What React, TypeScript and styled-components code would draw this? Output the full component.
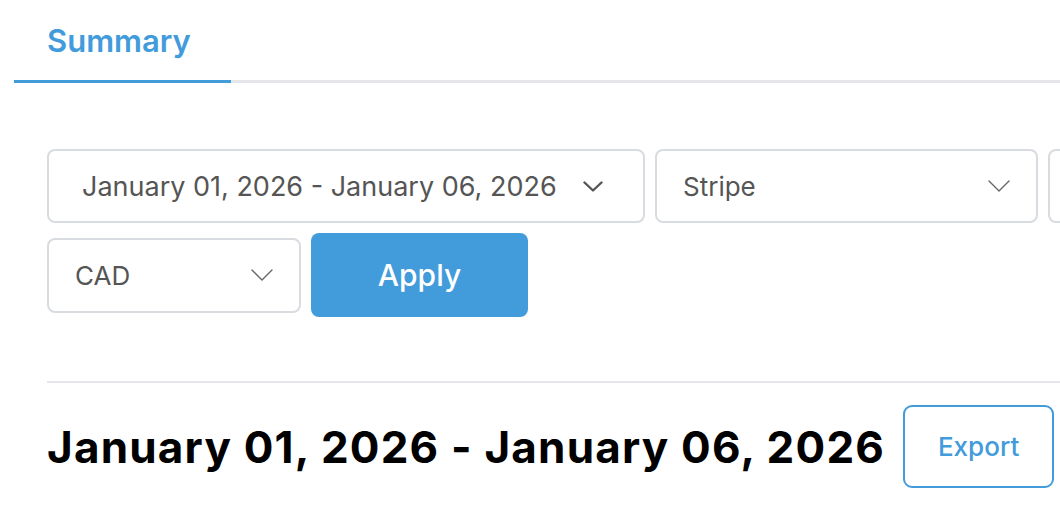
import styled, { createGlobalStyle } from 'styled-components'

const GlobalStyle = createGlobalStyle`
  body {
    margin: 0;
    background: #fff;
    overflow: hidden;
    font-family: Inter, "Noto Sans", sans-serif;
  }
  * {
    box-sizing: border-box;
  }
`

const Page = styled.div`
  padding-left: 14px;
  width: 1500px;
`

const TabBar = styled.div`
  display: flex;
  height: 83px;
  border-bottom: 3px solid #e5e6ea;
`

const Tab = styled.div<{ $active?: boolean }>`
  width: 217px;
  height: 83px;
  margin-bottom: -3px;
  padding: 25px 0 0 33px;
  font-size: 31px;
  line-height: 31px;
  font-weight: 600;
  color: #429bdb;
  border-bottom: 3px solid ${(p) => (p.$active ? '#429bdb' : 'transparent')};
`

const Content = styled.div`
  padding-left: 33px;
`

const Filters = styled.div`
  margin-top: 66px;
  width: 1400px;
  display: flex;
  flex-wrap: wrap;
  align-items: center;
  column-gap: 10px;
  row-gap: 10px;
`

const Select = styled.div<{ $width?: number; $height?: number }>`
  width: ${(p) => (p.$width ? `${p.$width}px` : 'auto')};
  height: ${(p) => p.$height || 74}px;
  display: flex;
  align-items: center;
  justify-content: space-between;
  padding: 0 26px;
  border: 2px solid #d8dbe0;
  border-radius: 8px;
  color: #555;
  font-size: 26px;
  background: #fff;
`

const DateSelect = styled(Select)`
  justify-content: flex-start;
  gap: 26px;
  padding: 0 0 0 33px;
  font-size: 27px;
`

const ApplyButton = styled.button`
  width: 217px;
  height: 84px;
  border: none;
  border-radius: 8px;
  background: #429bdb;
  color: #fff;
  font-family: inherit;
  font-size: 30px;
  font-weight: 500;
  padding: 0;
`

const Divider = styled.div`
  margin-top: 64px;
  height: 2px;
  background: #e6e7eb;
`

const HeadingRow = styled.div`
  margin-top: 22px;
  display: flex;
  align-items: center;
  gap: 18px;
`

const Heading = styled.h1`
  margin: 0;
  font-size: 44px;
  font-weight: 700;
  letter-spacing: 1.2px;
  color: #000;
  white-space: nowrap;
`

const ExportButton = styled.button`
  width: 151px;
  height: 83px;
  border: 2px solid #429bdb;
  border-radius: 9px;
  background: #fff;
  color: #429bdb;
  font-family: inherit;
  font-size: 26px;
  font-weight: 500;
  padding: 0;
`

const Chevron = ({ bold }: { bold?: boolean }) =>
  bold ? (
    <svg width="20" height="11" viewBox="0 0 20 11" fill="none">
      <path d="M1.5 1.5 L10 9.5 L18.5 1.5" stroke="#555" strokeWidth="2.4" strokeLinecap="round" strokeLinejoin="round" />
    </svg>
  ) : (
    <svg width="22" height="12" viewBox="0 0 22 12" fill="none">
      <path d="M1 1 L11 11 L21 1" stroke="#666" strokeWidth="1.4" strokeLinecap="round" strokeLinejoin="round" />
    </svg>
  )

const App = () => {
  const range = 'January 01, 2026 - January 06, 2026'
  return (
    <Page>
      <GlobalStyle />
      <TabBar>
        <Tab $active>Summary</Tab>
      </TabBar>
      <Content>
        <Filters>
          <DateSelect $width={598}>
            <span>{range}</span>
            <Chevron bold />
          </DateSelect>
          <Select $width={383}>
            <span>Stripe</span>
            <Chevron />
          </Select>
          <Select $width={383} />
          <Select $width={254} $height={75}>
            <span>CAD</span>
            <Chevron />
          </Select>
          <ApplyButton>Apply</ApplyButton>
        </Filters>
        <Divider />
        <HeadingRow>
          <Heading>{range}</Heading>
          <ExportButton>Export</ExportButton>
        </HeadingRow>
      </Content>
    </Page>
  )
}

export default App
